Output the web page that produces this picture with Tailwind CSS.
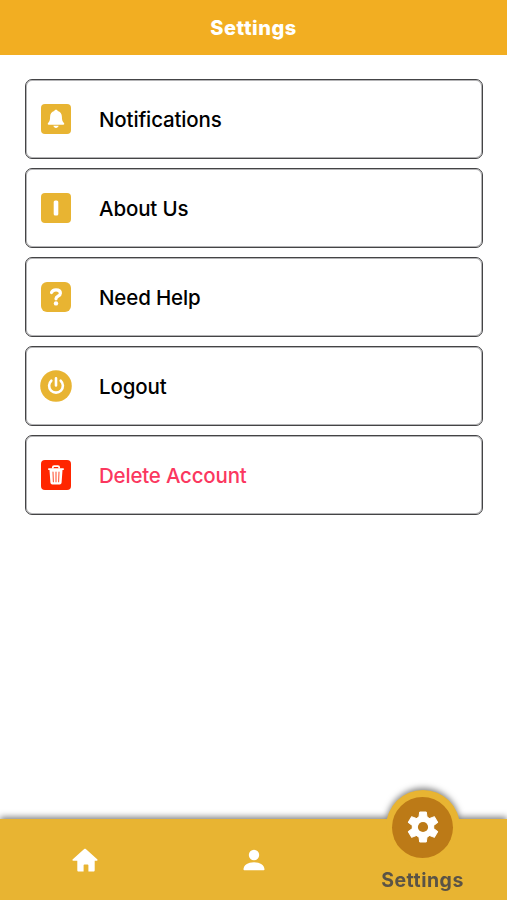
<!DOCTYPE html>
<html lang="en">
<head>
    <meta charset="UTF-8">
    <meta name="viewport" content="width=device-width, initial-scale=1.0">
    <title>Settings</title>
    <script src="https://cdn.jsdelivr.net/npm/@tailwindcss/browser@4"></script>
</head>
<body class="bg-white font-['Inter','Liberation_Sans',sans-serif]">
    <div class="h-[900px] w-full flex flex-col overflow-hidden">
        <header class="h-[55px] shrink-0 bg-[#f2ae22] flex items-center justify-center">
            <h1 class="text-[20px] leading-6 tracking-[0.5px] font-extrabold text-white">Settings</h1>
        </header>

        <main class="grow pt-6 px-[25px] flex flex-col gap-[9px]">
            <a href="#" class="h-20 w-[458px] shrink-0 flex items-center pl-[15px] gap-7 rounded-[7px] border border-[#444446] shadow-[inset_0_0_0_1px_#b4b4b6]">
                <svg class="w-[30px] h-[30px]" viewBox="0 0 30 30">
                    <rect width="30" height="30" rx="4" fill="#e8b432" />
                    <path fill="#fff" d="M15 5.800c.9 0 1.500.5 1.700 1.200 2.600.7 4.200 3 4.200 5.800 0 3.200.5 4.700 2 6.100.7.700.4 1.800-.6 1.800H7.700c-1 0-1.300-1.100-.6-1.800 1.500-1.400 2-2.900 2-6.100 0-2.800 1.600-5.100 4.200-5.800.2-.7.8-1.200 1.700-1.200zM12.400 21.800h5.200c-.3 1.300-1.300 2.200-2.600 2.200s-2.300-.9-2.600-2.200z" />
                </svg>
                <span class="pt-px text-[20.5px] leading-6 tracking-[-0.15px] font-[550] text-black">Notifications</span>
            </a>
            <a href="#" class="h-20 w-[458px] shrink-0 flex items-center pl-[15px] gap-7 rounded-[7px] border border-[#444446] shadow-[inset_0_0_0_1px_#b4b4b6]">
                <svg class="w-[30px] h-[30px]" viewBox="0 0 30 30">
                    <rect width="30" height="30" rx="4" fill="#e8b432" />
                    <rect x="12.700" y="7.500" width="4.600" height="15" rx="1.500" fill="#fff" />
                </svg>
                <span class="pt-px text-[20.5px] leading-6 tracking-[-0.15px] font-[550] text-black">About Us</span>
            </a>
            <a href="#" class="h-20 w-[458px] shrink-0 flex items-center pl-[15px] gap-7 rounded-[7px] border border-[#444446] shadow-[inset_0_0_0_1px_#b4b4b6]">
                <svg class="w-[30px] h-[30px]" viewBox="0 0 30 30">
                    <rect width="30" height="30" rx="6" fill="#e8b432" />
                    <path fill="none" stroke="#fff" stroke-width="3.200" stroke-linecap="round" stroke-linejoin="round" d="M10.500 10.600c.6-1.800 2.300-2.700 4.500-2.700 2.600 0 4.400 1.300 4.400 3.400 0 3-4.400 2.800-4.400 5.500" />
                    <circle cx="15" cy="21.400" r="2.200" fill="#fff" />
                </svg>
                <span class="pt-px text-[20.5px] leading-6 tracking-[-0.15px] font-[550] text-black">Need Help</span>
            </a>
            <a href="#" class="h-20 w-[458px] shrink-0 flex items-center pl-[14px] gap-[27px] rounded-[7px] border border-[#444446] shadow-[inset_0_0_0_1px_#b4b4b6]">
                <svg class="w-8 h-8" viewBox="0 0 32 32">
                    <circle cx="16" cy="16" r="15.800" fill="#e8b432" />
                    <path fill="none" stroke="#fff" stroke-width="2.600" stroke-linecap="round" d="M11.300 10.700a6.900 6.900 0 1 0 9.400 0M16 8.200v7.200" />
                </svg>
                <span class="pt-px text-[20.5px] leading-6 tracking-[-0.15px] font-[550] text-black">Logout</span>
            </a>
            <a href="#" class="h-20 w-[458px] shrink-0 flex items-center pl-[15px] gap-7 rounded-[7px] border border-[#444446] shadow-[inset_0_0_0_1px_#b4b4b6]">
                <svg class="w-[30px] h-[30px]" viewBox="0 0 30 30">
                    <rect width="30" height="30" rx="4" fill="#ff2600" />
                    <path fill="none" stroke="#fff" stroke-width="1.700" d="M11.800 8.500V7.500c0-.8.500-1.300 1.300-1.300h3.800c.8 0 1.300.5 1.300 1.300v1" />
                    <path fill="#fff" d="M7.800 8.300h14.400c.5 0 .8.300.8.800s-.3.900-.8.900h-.7l-.9 12.600c-.1 1.200-.9 1.900-2 1.900h-7.200c-1.100 0-1.900-.7-2-1.900L8.500 10h-.7c-.5 0-.8-.4-.8-.9s.3-.8.8-.8z" />
                    <path fill="none" stroke="#ff5a3c" stroke-width="1.100" stroke-linecap="round" d="M12 12l.4 9.800M15 12v9.800M18 12l-.4 9.800" />
                </svg>
                <span class="pt-px text-[20.5px] leading-6 tracking-[-0.2px] font-[550] text-[#fb375f]">Delete Account</span>
            </a>
        </main>

        <nav class="relative h-[81px] shrink-0 bg-[#e8b432] grid grid-cols-3 drop-shadow-[0_-2px_3px_rgba(0,0,0,0.5)]">
            <a href="#" class="flex items-center justify-center">
                <svg class="w-[26px] h-6" viewBox="0 0 26 24">
                    <path fill="#fff" d="M12.200 1.100c.5-.4 1.100-.4 1.600 0l11.400 10.200c.7.600.4 1.400-.4 1.400h-2.100v9.500c0 .8-.5 1.300-1.300 1.300h-5v-6.300c0-.5-.3-.8-.8-.8h-3.200c-.5 0-.8.3-.8.8v6.300h-5c-.8 0-1.300-.5-1.300-1.300v-9.500H1.200c-.8 0-1.100-.8-.4-1.400z" />
                </svg>
            </a>
            <a href="#" class="flex items-center justify-center">
                <svg class="w-[22px] h-[22px]" viewBox="0 0 22 22">
                    <circle cx="11" cy="6" r="5.200" fill="#fff" />
                    <path fill="#fff" d="M.5 20.500c0-4.200 4.300-7.200 10.500-7.200s10.500 3 10.500 7.200c0 .5-.3.800-.8.800H1.300c-.5 0-.8-.3-.8-.8z" />
                </svg>
            </a>
            <a href="#" class="flex items-end justify-center pb-2">
                <!-- raised button of the active tab -->
                <span class="absolute -top-[29px] left-[385.5px] w-[74px] h-[74px] rounded-full bg-[#e8b432] flex items-center justify-center">
                    <span class="w-[61px] h-[61px] rounded-full bg-[#bc7a17] flex items-center justify-center">
                        <svg class="w-9 h-9" viewBox="-18 -18 36 36">
                            <g fill="#fff" stroke="#fff" stroke-linejoin="round">
                                <circle r="10.800" />
                                <path d="M-3.300-15h6.600l1 7h-8.600zM-3.300 15h6.600l1-7h-8.600z" />
                                <path transform="rotate(60)" d="M-3.300-15h6.600l1 7h-8.600zM-3.300 15h6.600l1-7h-8.600z" />
                                <path transform="rotate(120)" d="M-3.300-15h6.600l1 7h-8.600zM-3.300 15h6.600l1-7h-8.600z" />
                            </g>
                            <circle r="5.100" fill="#bc7a17" />
                        </svg>
                    </span>
                </span>
                <span class="text-[19.5px] leading-6 tracking-[0.5px] font-bold text-[#5a5346]">Settings</span>
            </a>
        </nav>
    </div>
</body>
</html>
